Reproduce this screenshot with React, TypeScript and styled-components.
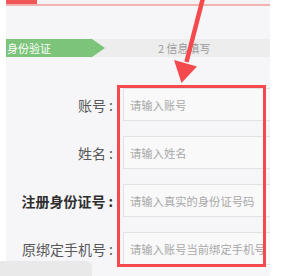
import React from "react";
import styled, { createGlobalStyle } from "styled-components";

const Global = createGlobalStyle`
  html, body { margin: 0; padding: 0; background: #ffffff; }
  body { font-family: "Noto Sans CJK SC", "Noto Sans", sans-serif; }
`;

const Page = styled.div`
  position: relative;
  width: 282px;
  height: 276px;
  overflow: hidden;
  background: #ffffff;
  display: flex;
`;

const Panel = styled.div`
  margin-left: 6px;
  width: 264px;
  height: 100%;
  background: #f6f6f8;
  display: flex;
  flex-direction: column;
`;

const TopStrip = styled.div`
  height: 4px;
  background: #f4f2f2;
  border-bottom: 2px solid #f2b3b3;
  display: flex;
`;

const TopActive = styled.div`
  width: 31px;
  height: 100%;
  background: #f05656;
`;

const Steps = styled.div`
  margin-top: 33px;
  height: 18px;
  display: flex;
  align-items: stretch;
  background: #ededee;
`;

const StepDone = styled.div`
  position: relative;
  width: 86px;
  background: #7cc47a;
  color: #ffffff;
  font-size: 11px;
  line-height: 18px;
  padding-left: 1px;
  box-sizing: border-box;
  &::after {
    content: "";
    position: absolute;
    left: 100%;
    top: 0;
    border-top: 9px solid transparent;
    border-bottom: 9px solid transparent;
    border-left: 13px solid #7cc47a;
  }
`;

const StepNext = styled.div`
  padding-left: 66px;
  color: #9a9a9a;
  font-size: 11px;
  line-height: 18px;
`;

const Form = styled.div`
  margin-top: 31px;
  display: flex;
  flex-direction: column;
  gap: 15px;
`;

const Row = styled.div`
  display: grid;
  grid-template-columns: 117px 1fr;
  align-items: center;
  height: 33px;
`;

const Label = styled.div<{ $strong?: boolean }>`
  text-align: right;
  padding-right: 10px;
  font-size: 14px;
  white-space: nowrap;
  color: ${(p) => (p.$strong ? "#2e2e2e" : "#585858")};
  font-weight: ${(p) => (p.$strong ? 700 : 400)};
`;

const Colon = styled.span`
  margin-left: 3px;
`;

const Field = styled.div`
  height: 33px;
  box-sizing: border-box;
  border: 1px solid #e2e2e4;
  border-right: none;
  background: #f9f9fa;
  display: flex;
  align-items: center;
  padding-left: 6px;
  overflow: hidden;
  white-space: nowrap;
`;

const Placeholder = styled.span`
  font-size: 11.3px;
  color: #a8a8a8;
`;

const Highlight = styled.div`
  position: absolute;
  left: 117px;
  top: 85px;
  width: 149px;
  height: 182px;
  box-sizing: border-box;
  border: 3.5px solid #f44a4e;
  pointer-events: none;
`;

const Arrow = styled.svg`
  position: absolute;
  left: 0;
  top: 0;
  pointer-events: none;
`;

const Toast = styled.div`
  position: absolute;
  left: 0;
  bottom: 0;
  width: 92px;
  height: 15px;
  background: #e9e9ea;
  border-top-right-radius: 6px;
`;

const rows = [
  { label: "账号", placeholder: "请输入账号" },
  { label: "姓名", placeholder: "请输入姓名" },
  { label: "注册身份证号", placeholder: "请输入真实的身份证号码", strong: true },
  { label: "原绑定手机号", placeholder: "请输入账号当前绑定手机号" },
];

export default function App() {
  return (
    <>
      <Global />
      <Page>
        <Panel>
          <TopStrip>
            <TopActive />
          </TopStrip>
          <Steps>
            <StepDone>身份验证</StepDone>
            <StepNext>2 信息填写</StepNext>
          </Steps>
          <Form>
            {rows.map((r) => (
              <Row key={r.label}>
                <Label $strong={r.strong}>
                  {r.label}
                  <Colon>:</Colon>
                </Label>
                <Field>
                  <Placeholder>{r.placeholder}</Placeholder>
                </Field>
              </Row>
            ))}
          </Form>
        </Panel>
        <Highlight />
        <Arrow width="282" height="276" viewBox="0 0 282 276">
          <line x1="203" y1="-2" x2="186.5" y2="62" stroke="#f44a4e" strokeWidth="4.5" />
          <polygon points="174,60 197,66.5 181.5,83" fill="#f44a4e" />
        </Arrow>
        <Toast />
      </Page>
    </>
  );
}
